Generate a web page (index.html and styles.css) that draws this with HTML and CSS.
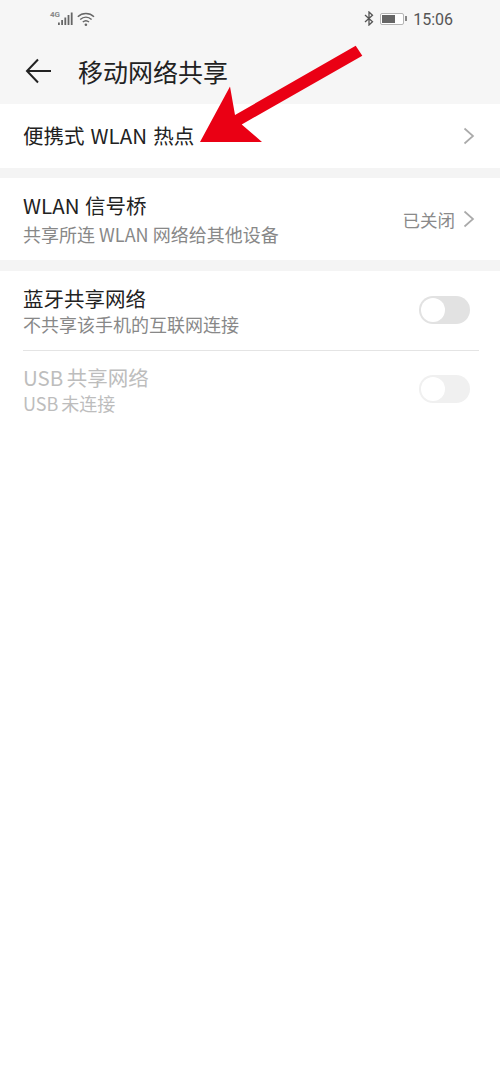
FILE: index.html
```html
<!DOCTYPE html>
<html lang="zh-CN">
<head>
<meta charset="utf-8">
<title>移动网络共享</title>
<link rel="stylesheet" href="styles.css">
</head>
<body>
<div class="page">
  <header class="top">
    <div class="status">
      <div class="status-left">
        <span class="net">4G</span>
        <svg class="signal" width="16" height="14" viewBox="0 0 16 14"><rect x="0" y="10.5" width="1.8" height="2.5"/><rect x="3.2" y="8" width="1.8" height="5"/><rect x="6.4" y="5.5" width="1.8" height="7.5"/><rect x="9.6" y="3" width="1.8" height="10"/><rect x="12.8" y="0.5" width="1.8" height="12.5"/></svg>
        <svg class="wifi" width="18" height="15" viewBox="0 0 18 15" fill="none" stroke="#666" stroke-width="1.4"><path d="M0.8 4.8C5.4 0.4 12.4 0.4 17 4.8"/><path d="M3.2 7.5C6.6 4.4 11.2 4.4 14.6 7.5"/><path d="M5.8 10.1C7.6 8.5 10.2 8.5 12 10.1"/><circle cx="8.9" cy="12.7" r="1.3" fill="#666" stroke="none"/></svg>
      </div>
      <div class="status-right">
        <svg class="bt" width="10" height="15" viewBox="0 0 10 15" fill="none" stroke="#555" stroke-width="1.3"><path d="M1 4L8.5 10.7L5 14V1L8.5 4.3L1 11"/></svg>
        <span class="battery"><span class="level"></span></span>
        <span class="cap"></span>
        <span class="time">15:06</span>
      </div>
    </div>
    <div class="bar">
      <svg class="back" width="27" height="26" viewBox="0 0 27 26" fill="none" stroke="#222" stroke-width="2"><path d="M13 1.5L2 13L13 24.5M2 13H26"/></svg>
      <h1>移动网络共享</h1>
    </div>
  </header>

  <section class="group first">
    <div class="row single">
      <div class="title">便携式 WLAN 热点</div>
      <svg class="chev" width="12" height="18" viewBox="0 0 12 18" fill="none"><path d="M1.5 1.5L10 9L1.5 16.5"/></svg>
    </div>
  </section>

  <section class="group second">
    <div class="row bridge">
      <div class="texts">
        <div class="title">WLAN 信号桥</div>
        <div class="sub">共享所连 WLAN 网络给其他设备</div>
      </div>
      <div class="value">
        <span>已关闭</span>
        <svg class="chev" width="12" height="18" viewBox="0 0 12 18" fill="none"><path d="M1.5 1.5L10 9L1.5 16.5"/></svg>
      </div>
    </div>
  </section>

  <section class="group third">
    <div class="row share">
      <div class="texts">
        <div class="title">蓝牙共享网络</div>
        <div class="sub">不共享该手机的互联网连接</div>
      </div>
      <div class="switch"><span class="knob"></span></div>
    </div>
    <div class="rule"></div>
    <div class="row share off">
      <div class="texts">
        <div class="title">USB 共享网络</div>
        <div class="sub">USB 未连接</div>
      </div>
      <div class="switch"><span class="knob"></span></div>
    </div>
  </section>

  <svg class="arrow" width="500" height="160" viewBox="0 0 500 160"><path d="M200 142L230 86.5L235 115L355.7 45.7L362.3 55.7L241.7 124.5L262 142Z"/></svg>
</div>
</body>
</html>
```

FILE: styles.css
```css
* { box-sizing: border-box; }
html, body { margin: 0; padding: 0; background: #fff; }
body { font-family: "Noto Sans CJK SC", Roboto, sans-serif; color: #1f1f1f; }
.page { position: relative; width: 500px; height: 1083px; overflow: hidden; background: #fff; }

.top { background: #f6f6f6; height: 104px; }
.status { display: flex; justify-content: space-between; height: 36px; padding: 10px 47px 0 50px; }
.status-left, .status-right { display: flex; align-items: flex-start; }
.net { font-family: Roboto, sans-serif; font-size: 8px; font-weight: 700; line-height: 8px; width: 8px; color: #888; margin-top: 1px; white-space: nowrap; }
.signal { fill: #666; margin-top: 2px; }
.wifi { margin: 2px 0 0 3px; }
.bt { margin: 1px 6px 0 0; }
.battery { display: block; width: 24px; height: 12px; margin-top: 3px; border: 1px solid #b5b5b5; border-radius: 2px; padding: 1px; background: #fff; }
.level { display: block; width: 13px; height: 8px; background: #666; }
.cap { display: block; width: 2px; height: 5px; margin: 6px 6px 0 1px; background: #888; }
.time { font-family: Roboto, sans-serif; font-size: 16px; line-height: 19px; color: #555; }

.bar { display: flex; align-items: center; height: 68px; padding: 2px 0 0 25px; }
.back { margin-right: 26px; }
h1 { margin: 0; font-size: 25px; line-height: 32px; font-weight: 400; color: #222; }

.group { background: #fff; }
.first { border-bottom: 10px solid #f4f4f4; }
.second { border-bottom: 11px solid #f4f4f4; }

.row { display: flex; align-items: center; justify-content: space-between; padding: 0 25px 0 23px; }
.single { height: 64px; }
.single .title { word-spacing: 1.5px; margin-top: -2px; }
.bridge { height: 82px; padding-top: 2px; }
.bridge .title { word-spacing: 1px; margin-top: -2px; }
.bridge .sub { margin-top: 3px; }
.share { height: 79px; padding-right: 30px; }
.off { height: 76px; }
.title { font-size: 20.5px; line-height: 28px; color: #222; }
.sub { font-size: 18px; line-height: 25px; color: #888; }
.value { display: flex; align-items: center; gap: 8px; font-size: 17.5px; color: #8a8a8a; margin-top: -2px; }
.chev { display: block; }
.chev path { stroke: #aaa; stroke-width: 1.7; }
.rule { height: 1px; margin: 0 21px 0 23px; background: #e4e4e4; }

.switch { width: 51px; height: 28px; border-radius: 14px; background: #e2e2e2; padding: 2px; margin-top: -1px; }
.knob { display: block; width: 24px; height: 24px; border-radius: 50%; background: #fff; }
.off .title, .off .sub { color: #bdbdbd; word-spacing: -1px; }
.off .switch { background: #f0f0f0; }

.arrow { position: absolute; left: 0; top: 0; }
.arrow path { fill: #ea0014; }
```
